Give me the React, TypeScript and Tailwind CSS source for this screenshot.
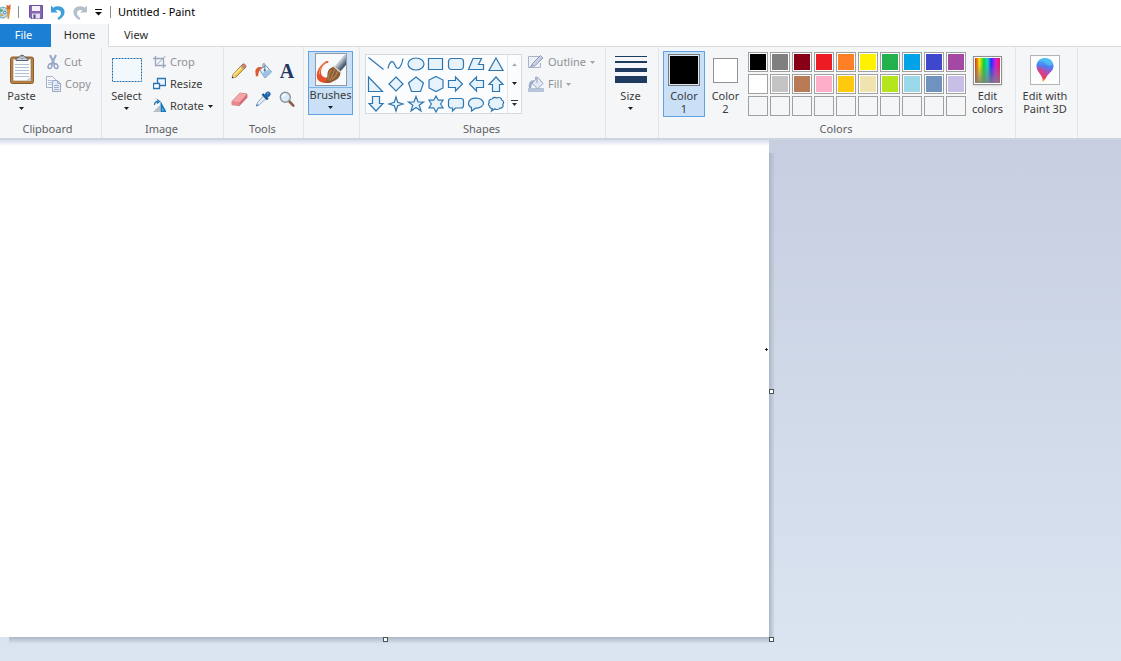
import React from 'react';

type IconProps = { children: React.ReactNode; w?: number; h?: number };

function Icon({ children, w = 16, h = 16 }: IconProps) {
  return (
    <svg width={w} height={h} viewBox={`0 0 ${w} ${h}`} fill="none" className="shrink-0" aria-hidden="true">
      {children}
    </svg>
  );
}

function Arrow({ muted = false }: { muted?: boolean }) {
  return (
    <svg width="5" height="3" viewBox="0 0 5 3" className="shrink-0" aria-hidden="true">
      <path d="M0 0H5L2.5 3Z" fill={muted ? '#a3a5a9' : '#1e1e1e'} />
    </svg>
  );
}

/* ---------- ribbon scaffolding ---------- */

function Group({ label, className, children }: { label?: string; className: string; children: React.ReactNode }) {
  return (
    <section aria-label={label} className={`flex shrink-0 flex-col border-r border-[#e2e5e9] pt-1 ${className}`}>
      <div className="flex h-[69px] items-start">{children}</div>
      <div className="h-[18px] pr-[2px] text-center leading-[18px] text-[#5c6066]">{label}</div>
    </section>
  );
}

type LargeProps = {
  icon: React.ReactNode;
  line1: string;
  line2?: string;
  className: string;
};

function LargeButton({ icon, line1, line2, className }: LargeProps) {
  return (
    <button type="button" className={`flex shrink-0 flex-col items-center leading-[13px] ${className}`}>
      <span className="flex h-[38px] items-center justify-center">{icon}</span>
      <span className="whitespace-nowrap">{line1}</span>
      <span className="flex h-[13px] items-center justify-center whitespace-nowrap">{line2 ?? <Arrow />}</span>
    </button>
  );
}

function SmallButton({
  icon,
  label,
  muted = false,
  arrow = false,
}: {
  icon: React.ReactNode;
  label: string;
  muted?: boolean;
  arrow?: boolean;
}) {
  return (
    <button
      type="button"
      disabled={muted}
      className={`flex h-[22px] items-center gap-1 whitespace-nowrap ${muted ? 'text-[#8f9196]' : 'text-[#3b3b3b]'}`}
    >
      {icon}
      <span>{label}</span>
      {arrow && <Arrow muted={muted} />}
    </button>
  );
}

/* ---------- icons ---------- */

const clipboardIcon = (
  <Icon w={28} h={34}>
    <rect x="2.5" y="4" width="23" height="26.5" rx="2" fill="#b98242" stroke="#8a5c2b" />
    <path d="M5 6H23V28H5Z" fill="#fbfcfe" stroke="#8f6a3c" strokeWidth=".6" />
    <path d="M7 11.5H21M7 14.5H21M7 17.5H21M7 20.5H21M7 23.5H21" stroke="#b3c0d3" />
    <path d="M18 28L23 23V28Z" fill="#c4ccd8" />
    <path d="M8 7.5V5.5L11 4.5C11.5 1.5 16.5 1.5 17 4.5L20 5.5V7.5Z" fill="#c9ced6" stroke="#596273" />
    <circle cx="14" cy="4.4" r="1.2" fill="#fff" stroke="#596273" strokeWidth=".7" />
  </Icon>
);

const cutIcon = (
  <Icon w={14} h={16}>
    <path d="M4 1L8.6 10.5M10 1L5.4 10.5" stroke="#9aa9c8" strokeWidth="2" />
    <ellipse cx="4" cy="12.2" rx="1.8" ry="2.4" transform="rotate(25 4 12.2)" stroke="#8d9dc0" strokeWidth="1.4" />
    <ellipse cx="10" cy="12.2" rx="1.8" ry="2.4" transform="rotate(-25 10 12.2)" stroke="#8d9dc0" strokeWidth="1.4" />
  </Icon>
);

const copyIcon = (
  <Icon w={15} h={16}>
    <path d="M.5 .5H6.5L9.5 3.5V11.5H.5Z" fill="#f4f7fc" stroke="#a3b0cc" />
    <path d="M2 4.5H6M2 6.5H6M2 8.5H6" stroke="#b4c0d8" />
    <path d="M6.5 4.5H11.5L14.5 7.5V15.5H6.5Z" fill="#e6ecf7" stroke="#9aa9c8" />
    <path d="M11.5 4.5V7.5H14.5M8 9.5H13M8 11.5H13M8 13.5H13" stroke="#a0aecb" />
  </Icon>
);

const selectIcon = (
  <Icon w={32} h={26}>
    <rect x="1.5" y="1.5" width="29" height="23" fill="#f3f8fd" stroke="#1c6cab" strokeDasharray="2 1" />
  </Icon>
);

const cropIcon = (
  <Icon w={13} h={14}>
    <path d="M2.5 1V10.5H13M0 3.5H10.5V13" stroke="#9aa5bd" strokeWidth="1.3" />
    <path d="M4 9.5L12.5 1" stroke="#9aa5bd" />
  </Icon>
);

const resizeIcon = (
  <Icon w={13} h={14}>
    <path d="M4.5 1.5H12.5V8.5H4.5Z" fill="#edf6ff" stroke="#2673b5" strokeWidth="1.3" />
    <path d="M.5 6.5H6.5V11.5H.5Z" fill="#fff" stroke="#2673b5" strokeWidth="1.3" />
  </Icon>
);

const rotateIcon = (
  <Icon w={13} h={14}>
    <path d="M0 13L7 6V13Z" fill="#b8c0c9" />
    <path d="M7.5 2V13H13.5Z" fill="#1875ba" />
    <path d="M9 8V12H11.2Z" fill="#5db0e5" />
    <path d="M1.5 6C1.5 3.5 3 2.5 5 2.5M4 .5L6.5 2.5L4 4.5" stroke="#2378b8" strokeWidth="1.3" />
  </Icon>
);

const pencilIcon = (
  <Icon>
    <path d="M2 11.5L11 1.8L14.4 4.6L5 14L1.2 15Z" fill="#f3c64a" stroke="#936e29" strokeWidth=".8" />
    <path d="M3 12L12 2.8" stroke="#fff1a8" strokeWidth="1.2" />
    <path d="M10.3 2.5L12 .9C13.4.5 15.4 2.3 15 3.9L13.6 5.3Z" fill="#d98074" stroke="#8c5a52" strokeWidth=".6" />
    <path d="M9.5 3.4L12.8 6.2" stroke="#8b98a8" />
    <path d="M1.2 15L2.2 11.8L4.6 14Z" fill="#f1dbb8" />
    <path d="M.8 15.3L1.5 13.2L2.9 14.6Z" fill="#24303c" />
  </Icon>
);

const fillIcon = (
  <Icon w={17}>
    <path d="M4.5 6.5L11 2.5L16.5 9L10 15Z" fill="#e3eef8" stroke="#6c8fb4" />
    <path d="M7 10.2L14.2 6.6L16.5 9L10 15Z" fill="#9cc3e5" />
    <path d="M9.8 7V1.5C9.8.2 8 .2 8 1.5V4.5" stroke="#71849b" />
    <circle cx="9.8" cy="7.4" r="1.1" fill="#53697f" />
    <path d="M7 4.2C3 3 .3 5.5.4 8.5L.8 12.8C1.2 13.8 2.8 13.8 3.2 12.5C3.2 9.5 4.6 7 7 4.2Z" fill="#dc5a2f" />
  </Icon>
);

const textIcon = (
  <span aria-hidden="true" className="font-['Liberation_Serif',serif] text-[20px] leading-6 font-bold text-[#1f3864]">
    A
  </span>
);

const eraserIcon = (
  <Icon w={17}>
    <path d="M1 10.5L9 2L16 3V6.5L8.5 14.5L1 13.8Z" fill="#d86f78" stroke="#b4666c" strokeWidth=".7" />
    <path d="M1 10.5L9 2L16 3L8.5 11.2Z" fill="#f3a5a8" />
    <path d="M1 10.5L8.5 11.2V14.5L1 13.8Z" fill="#e9878c" />
  </Icon>
);

const pickerIcon = (
  <Icon>
    <path d="M8.5 5L11 7.5L4.5 13.6L1.5 15L2.5 11.5Z" fill="#e2f0fa" stroke="#7590ac" strokeWidth=".8" />
    <path d="M1 15.5L2 13L3.5 14.5Z" fill="#2a77c6" />
    <path d="M7.5 3L12.8 8.3" stroke="#1c4c85" strokeWidth="2.4" />
    <path d="M9 4.5C10.3 2.8 11 .6 13.3 .6C15.2.6 16.2 2.8 15.2 4.4C14.2 5.8 12.7 6.2 11.5 7.2Z" fill="#2468ad" />
    <path d="M12 3L13.5 2" stroke="#8bbde8" />
  </Icon>
);

const zoomIcon = (
  <Icon>
    <path d="M10 10L14.3 14.6" stroke="#8a5d4c" strokeWidth="2.6" strokeLinecap="round" />
    <circle cx="6.3" cy="6.3" r="5" fill="#dceaf6" stroke="#8d959e" strokeWidth="1.4" />
    <path d="M3.5 6C3.8 4.3 5 3.5 6.5 3.5" stroke="#fff" strokeWidth="1.3" />
  </Icon>
);

const brushesIcon = (
  <Icon w={32} h={33}>
    <defs>
      <linearGradient id="handle" x1="23" y1="7" x2="29" y2="12" gradientUnits="userSpaceOnUse">
        <stop stopColor="#eef2f5" />
        <stop offset=".5" stopColor="#a3afbb" />
        <stop offset="1" stopColor="#4b5c6d" />
      </linearGradient>
    </defs>
    <rect x=".5" y=".5" width="31" height="32" fill="#f7f9fb" stroke="#8d9aa8" />
    <path
      d="M13.5 8.5C12.5 7 9 9 6 12.5C2.5 16.5 1 21 2 25C3 28.5 7 30.5 15 30C19 29 19 25 16 23C11 26 6.5 24.5 6 20C5.6 16 8 11 12 10C13 9.6 13.8 9.2 13.5 8.5Z"
      fill="#e5502b"
    />
    <path d="M11 9.5C7 12 4 17 4.2 21.5" stroke="#f58b61" strokeWidth="1.1" />
    <path d="M31 2V12L25 19L19.5 13.5L29.5 1.5Z" fill="url(#handle)" />
    <path d="M18 14C21 12.8 26 16.5 25.5 20C25 26 19 29.5 9.5 30C14 27 11 20 14 16.6C15 15.3 16.5 14.5 18 14Z" fill="#8d5d36" />
    <path d="M16.5 17C14 19 14 23 13 27M20 16C18 20 17 24 14.5 28M23 17.5C22 21 20 24 17 26.5" stroke="#b08252" strokeWidth="1.1" />
    <path d="M18.5 13L26 19.5" stroke="#d5dde3" strokeWidth="1.6" />
  </Icon>
);

const outlineIcon = (
  <Icon>
    <path d="M11 2.5H.5V13.5H12.5V9" fill="#eef1f8" stroke="#a9b3cc" />
    <path d="M3.5 12.5L4.5 9.5L12.5 1.5L15 4L6.8 11.8Z" fill="#c8d0e3" stroke="#8f9bb8" />
    <path d="M1 14L5 10" stroke="#8f9bb8" />
  </Icon>
);

const fillMutedIcon = (
  <Icon>
    <rect y="12" width="16" height="4" fill="#b8c4d9" />
    <path d="M4 7L10 1.5L15 7.5L9.5 13Z" fill="#e2e8f4" stroke="#97a5c3" />
    <path d="M9 7V1.5C9 .5 7.5.5 7.5 1.5V3.5" stroke="#98a4bd" />
    <path d="M6.5 4.5C2.5 3.5 .5 7 .8 11.5C1.2 13 3.4 12.5 3.5 10.5C3.5 8 4.5 6.5 6.5 4.5Z" fill="#9dabca" />
  </Icon>
);

const sizeIcon = (
  <Icon w={32} h={30}>
    <path d="M0 1.5H32" stroke="#1e3a5f" />
    <rect y="6" width="32" height="2" fill="#1e3a5f" />
    <rect y="13" width="32" height="4" fill="#1e3a5f" />
    <rect y="21" width="32" height="7" fill="#1e3a5f" />
  </Icon>
);

const editColorsIcon = (
  <span className="flex size-[29px] border border-[#8f8f8f] bg-white p-px shadow-sm">
    <span className="relative flex-1 bg-[linear-gradient(90deg,#d92b12,#f2e313_18%,#18d024_35%,#13d4cf_50%,#2630ee_65%,#d31bea_82%,#ef1a3e)]">
      <span className="absolute inset-0 bg-[linear-gradient(180deg,transparent_25%,#808080dd)]" />
    </span>
  </span>
);

const paint3dIcon = (
  <Icon w={30} h={30}>
    <defs>
      <linearGradient id="drop" x1="17" y1="3" x2="13" y2="27" gradientUnits="userSpaceOnUse">
        <stop stopColor="#3fd0f7" />
        <stop offset=".35" stopColor="#4f7df0" />
        <stop offset=".6" stopColor="#b04bc4" />
        <stop offset=".82" stopColor="#ee3b58" />
        <stop offset="1" stopColor="#ffc53a" />
      </linearGradient>
    </defs>
    <rect x=".5" y=".5" width="29" height="29" fill="#fdfdfd" stroke="#b4b4b4" />
    <path d="M15 3C20 3 23.5 6.6 23.5 11C23.5 16 19 18 17 21C15.6 23.2 15 25.8 12.5 27C12.6 24.8 12.5 23 11.5 21C9.8 18 6.5 15.5 6.5 11C6.5 6.6 10 3 15 3Z" fill="url(#drop)" />
    <path d="M7 9C9 5 13 5.5 15 8C17 11 20 11 23 9C22 5.5 19 3 15 3C11 3 8 5 7 9Z" fill="#55bff4" opacity=".7" />
    <path d="M7 13C10 11 13 13 15 16C16 18 15 21 14 24L11.5 21C10 18 7.5 16.5 7 13Z" fill="#e3406f" opacity=".65" />
  </Icon>
);

const saveIcon = (
  <Icon w={14} h={14}>
    <path d="M.5.5H13.5V13.5H2L.5 12Z" fill="#8567b5" stroke="#6a4f9c" />
    <rect x="3" y="1" width="8" height="5" fill="#f4f1fa" />
    <rect x="3" y="8.5" width="8" height="5" fill="#e2e0ee" />
    <rect x="4.5" y="9.5" width="2" height="4" fill="#5a4387" />
  </Icon>
);

const undoPath = 'M0 .5L2.2 2.7C6 .3 11 .8 13 4.5C14.8 8.5 12 13 7.5 15L6.5 13C9.5 11.3 10.6 8.8 9.6 6.6C8.6 4.8 6.4 4.6 4.6 5.3L6.8 7.5H0Z';

const appIcon = (
  <Icon w={11} h={16}>
    <path d="M0 4C4 2 8 4 8 8.5C8 13 4 15 0 13.5Z" fill="#bcdcec" stroke="#6ba2be" />
    <circle cx="1.5" cy="6.5" r="1.2" fill="#46a24b" />
    <circle cx="4.8" cy="8.5" r="1.3" fill="#fff" stroke="#3e7fc1" />
    <circle cx="2" cy="11" r="1.2" fill="#e0a030" />
    <path d="M7 5L10.5 4.5L9 15L7.5 15Z" fill="#e09938" />
    <path d="M6.5 5.5L6.5 .5L8.3 2L10.5 0V5Z" fill="#d5692d" />
  </Icon>
);

/* ---------- data ---------- */

const tools = [
  { name: 'Pencil', icon: pencilIcon },
  { name: 'Fill with color', icon: fillIcon },
  { name: 'Text', icon: textIcon },
  { name: 'Eraser', icon: eraserIcon },
  { name: 'Color picker', icon: pickerIcon },
  { name: 'Magnifier', icon: zoomIcon },
];

const shapes: [string, string][] = [
  ['Line', 'M2.5 3.5L17.5 15.5'],
  ['Curve', 'M2 14.5C4 6 7 6 9 11C11 17 15 15 17 4.5'],
  ['Oval', 'M2 10A8 6 0 1 1 18 10A8 6 0 1 1 2 10Z'],
  ['Rectangle', 'M2.5 4.5H16.5V15.5H2.5Z'],
  ['Rounded rectangle', 'M5.5 4.5H14.5A3 3 0 0 1 17.5 7.5V12.5A3 3 0 0 1 14.5 15.5H5.5A3 3 0 0 1 2.5 12.5V7.5A3 3 0 0 1 5.5 4.5Z'],
  ['Polygon', 'M7 4.5H15.5L12.5 10.5H17.5V15.5H2.5Z'],
  ['Triangle', 'M10 4L17 16.5H3Z'],
  ['Right triangle', 'M2.5 3V17.5H16.5Z'],
  ['Diamond', 'M10 3L17 10L10 17L3 10Z'],
  ['Pentagon', 'M10 3L17.5 9L14.5 17.5H5.5L2.5 9Z'],
  ['Hexagon', 'M10 2.5L17 6V14L10 17.5L3 14V6Z'],
  ['Right arrow', 'M2.5 6.5H9.5V3L16.5 10L9.5 17V13.5H2.5Z'],
  ['Left arrow', 'M17.5 6.5H10.5V3L3.5 10L10.5 17V13.5H17.5Z'],
  ['Up arrow', 'M6.5 17.5V10.5H3L10 3L17 10.5H13.5V17.5Z'],
  ['Down arrow', 'M6.5 2.5V9.5H3L10 17L17 9.5H13.5V2.5Z'],
  ['Four-point star', 'M10 3L11.7 8.3L17 10L11.7 11.7L10 17L8.3 11.7L3 10L8.3 8.3Z'],
  ['Five-point star', 'M10 2.5L12 8H17.5L13.2 11.3L15 17L10 13.5L5 17L6.8 11.3L2.5 8H8Z'],
  ['Six-point star', 'M10 2L12.3 6.2H17L14.6 10L17 13.8H12.3L10 18L7.7 13.8H3L5.4 10L3 6.2H7.7Z'],
  ['Rounded callout', 'M5 4.5H15A2.5 2.5 0 0 1 17.5 7V11.5A2.5 2.5 0 0 1 15 14H9.5L6.5 17V14H5A2.5 2.5 0 0 1 2.5 11.5V7A2.5 2.5 0 0 1 5 4.5Z'],
  ['Oval callout', 'M5.5 17V13.6C3.2 12.6 2.3 11 2.5 9C3 6 6 4.2 10 4.2C14.5 4.2 17.5 6.5 17.5 9.2C17.5 12 14 14.2 9.5 14.2Z'],
  ['Cloud callout', 'M6 5C7.5 3 9.5 3 10.5 4C13 2.8 15.5 4 15.7 6C18 6.8 18 9.3 16.8 10.2C17.8 12.5 16.2 14.3 14 14C12.5 16 10 15.7 9 14.8L5.5 17L6.3 14.5C4.3 14.5 3.6 13.5 3.8 12.3C2 11.5 2.2 9.5 3.2 8.8C2.3 7 3.8 5 6 5Z'],
];

const palette: [string, string][] = [
  ['Black', '#000000'],
  ['Gray-50%', '#7f7f7f'],
  ['Dark red', '#880015'],
  ['Red', '#ed1c24'],
  ['Orange', '#ff7f27'],
  ['Yellow', '#fff200'],
  ['Green', '#22b14c'],
  ['Turquoise', '#00a2e8'],
  ['Indigo', '#3f48cc'],
  ['Purple', '#a349a4'],
  ['White', '#ffffff'],
  ['Gray-25%', '#c3c3c3'],
  ['Brown', '#b97a57'],
  ['Rose', '#ffaec9'],
  ['Gold', '#ffc90e'],
  ['Light yellow', '#efe4b0'],
  ['Lime', '#b5e61d'],
  ['Light turquoise', '#99d9ea'],
  ['Blue-gray', '#7092be'],
  ['Lavender', '#c8bfe7'],
];

/* ---------- sections ---------- */

function TitleBar() {
  return (
    <header className="flex h-6 items-center bg-white text-black">
      <span className="w-[18px]">{appIcon}</span>
      <span className="h-3 w-px bg-[#8b8b8b]" />
      <button type="button" aria-label="Save" className="ml-[10px]">{saveIcon}</button>
      <button type="button" aria-label="Undo" className="ml-2">
        <Icon w={14} h={15}>
          <path d={undoPath} fill="#3e9fdb" />
        </Icon>
      </button>
      <button type="button" aria-label="Redo" className="ml-2">
        <Icon w={14} h={15}>
          <path d={undoPath} fill="#b4bfcc" transform="translate(14 0) scale(-1 1)" />
        </Icon>
      </button>
      <button type="button" aria-label="Customize Quick Access Toolbar" className="ml-2">
        <Icon w={7} h={7}>
          <path d="M0 .5H7" stroke="#111" />
          <path d="M0 3H7L3.5 6.5Z" fill="#111" />
        </Icon>
      </button>
      <span className="ml-2 h-3 w-px bg-[#8b8b8b]" />
      <h1 className="ml-[7px]">Untitled - Paint</h1>
    </header>
  );
}

function Tabs() {
  return (
    <nav className="flex h-[23px] bg-white text-[#2b2b2b]">
      <button type="button" className="w-[51px] bg-[#1b7fd3] pr-1 pb-px text-white">File</button>
      <button type="button" className="w-[58px] border-r border-[#dadbdc] bg-[#f5f6f7] pb-px">Home</button>
      <div className="flex flex-1 border-b border-[#dadbdc]">
        <button type="button" className="px-[15px]">View</button>
      </div>
    </nav>
  );
}

function ShapeGallery() {
  return (
    <div className="mt-[3px] ml-[5px] flex h-[60px] w-[157px] border border-[#d5dae0] bg-[#fafcfe]">
      <div className="grid flex-1 grid-cols-[repeat(7,20px)] content-center">
        {shapes.map(([name, d], i) => (
          <button key={name} type="button" aria-label={name} className="flex h-[20px] items-center justify-center">
            <Icon w={20} h={20}>
              <path d={d} fill={i < 2 ? 'none' : '#e6f3fc'} stroke="#2f76ae" strokeWidth="1.2" />
            </Icon>
          </button>
        ))}
      </div>
      <div className="flex w-[14px] flex-col border-l border-[#e1e5ea]">
        <button type="button" aria-label="Scroll up" className="flex flex-1 rotate-180 items-center justify-center">
          <Arrow muted />
        </button>
        <button type="button" aria-label="Scroll down" className="flex flex-1 items-center justify-center">
          <Arrow />
        </button>
        <button type="button" aria-label="More shapes" className="flex flex-1 items-center justify-center">
          <Icon w={7} h={7}>
            <path d="M0 .5H7" stroke="#333" />
            <path d="M1 3H6L3.5 6Z" fill="#333" />
          </Icon>
        </button>
      </div>
    </div>
  );
}

function Palette() {
  return (
    <div className="mt-px ml-[2px] grid grid-cols-10 gap-[2px]">
      {palette.map(([name, color]) => (
        <button key={name} type="button" aria-label={name} className="flex size-[20px] border border-[#a0a0a0] bg-white p-px">
          <span className="flex-1" style={{ backgroundColor: color }} />
        </button>
      ))}
      {Array.from({ length: 10 }, (_, i) => (
        <button key={i} type="button" aria-label={`Custom color ${i + 1}`} className="size-[20px] border border-[#a0a0a0] bg-[#f5f6f7]" />
      ))}
    </div>
  );
}

function Ribbon() {
  return (
    <div className="flex overflow-hidden border-b-2 border-[#ccd5df] bg-[#f5f6f7] text-[#3b3b3b]">
      <Group label="Clipboard" className="w-[102px] *:last:pr-[6px]">
        <LargeButton icon={clipboardIcon} line1="Paste" className="w-[43px]" />
        <div className="ml-[3px]">
          <SmallButton icon={cutIcon} label="Cut" muted />
          <SmallButton icon={copyIcon} label="Copy" muted />
        </div>
      </Group>

      <Group label="Image" className="w-[122px]">
        <LargeButton icon={selectIcon} line1="Select" className="ml-[3px] w-[43px]" />
        <div className="ml-[5px]">
          <SmallButton icon={cropIcon} label="Crop" muted />
          <SmallButton icon={resizeIcon} label="Resize" />
          <SmallButton icon={rotateIcon} label="Rotate" arrow />
        </div>
      </Group>

      <Group label="Tools" className="w-[80px]">
        <div className="mt-[6px] ml-[3px] grid grid-cols-3">
          {tools.map((tool) => (
            <button key={tool.name} type="button" aria-label={tool.name} className="flex h-[28px] w-[24px] items-center justify-center">
              {tool.icon}
            </button>
          ))}
        </div>
      </Group>

      <Group className="w-[56px]">
        <button
          type="button"
          className="ml-1 flex h-[64px] w-[45px] flex-col border border-[#62a2e4] bg-[#c9e0f7] leading-[13px]"
        >
          <span className="flex h-[37px] w-full items-center justify-center border-b border-[#7fb3e6]">{brushesIcon}</span>
          <span className="w-full text-center">
            <span className="-mx-1 block">Brushes</span>
            <span className="flex h-[13px] items-center justify-center"><Arrow /></span>
          </span>
        </button>
      </Group>

      <Group label="Shapes" className="w-[246px]">
        <ShapeGallery />
        <div className="ml-[6px]">
          <SmallButton icon={outlineIcon} label="Outline" muted arrow />
          <SmallButton icon={fillMutedIcon} label="Fill" muted arrow />
        </div>
      </Group>

      <Group className="w-[53px]">
        <LargeButton icon={sizeIcon} line1="Size" className="ml-[3px] w-[43px]" />
      </Group>

      <Group label="Colors" className="w-[357px]">
        <LargeButton
          icon={<span className="size-[32px] border border-[#7a7a7a] bg-black outline-1 -outline-offset-2 outline-[#d9e8f6]" />}
          line1="Color"
          line2="1"
          className="ml-1 h-[66px] w-[42px] bg-[#c9e0f7] outline-1 -outline-offset-1 outline-[#62a2e4]"
        />
        <LargeButton
          icon={<span className="size-[25px] border border-[#929292] bg-white" />}
          line1="Color"
          line2="2"
          className="w-[41px]"
        />
        <Palette />
        <LargeButton icon={editColorsIcon} line1="Edit" line2="colors" className="w-[43px]" />
      </Group>

      <Group className="w-[62px]">
        <LargeButton icon={paint3dIcon} line1="Edit with" line2="Paint 3D" className="w-[58px]" />
      </Group>
    </div>
  );
}

function Handle({ className }: { className: string }) {
  return <span className={`absolute size-[5px] border border-[#4a5058] bg-white ${className}`} />;
}

function Workspace() {
  return (
    <main className="flex-1 bg-linear-to-b from-[#c6cee0] to-[#dbe5f1] pb-6">
      <div className="relative h-[497px] w-[769px] bg-white">
        <div className="h-[6px] bg-linear-to-b from-[#dcdfee] to-white" />
        <div className="absolute top-[13px] -right-[6px] bottom-0 w-[6px] bg-linear-to-r from-[#a9b5c5] to-[#a9b5c500]" />
        <div className="absolute right-0 -bottom-[7px] left-[9px] h-[7px] bg-linear-to-b from-[#abb7c5] to-[#abb7c500]" />
        <Handle className="top-[249px] -right-[5px]" />
        <Handle className="-bottom-[5px] left-[383px]" />
        <Handle className="-right-[5px] -bottom-[5px]" />
        <svg width="3" height="3" viewBox="0 0 3 3" className="absolute top-[208px] right-[1px]" aria-hidden="true">
          <path d="M1.5 0V3M0 1.5H3" stroke="#222" />
        </svg>
      </div>
    </main>
  );
}

export default function App() {
  return (
    <div className="flex min-h-screen flex-col bg-white font-['Noto_Sans','Open_Sans',sans-serif] text-[11px] leading-4">
      <TitleBar />
      <Tabs />
      <Ribbon />
      <Workspace />
    </div>
  );
}
